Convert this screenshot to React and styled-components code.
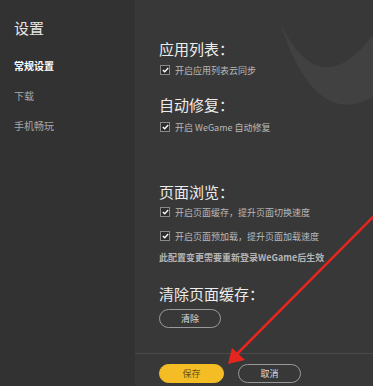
import React from 'react';
import styled, { createGlobalStyle } from 'styled-components';

const GlobalStyle = createGlobalStyle`
  html, body { margin: 0; padding: 0; background: #383838; }
  body { font-family: "Noto Sans CJK SC", "Noto Sans", sans-serif; }
`;

const Window = styled.div`
  display: flex;
  width: 373px;
  height: 386px;
  overflow: hidden;
  position: relative;
`;

const Sidebar = styled.nav`
  width: 135px;
  flex-shrink: 0;
  background: #323232;
  padding: 17px 0 0 14px;
  box-sizing: border-box;
  display: flex;
  flex-direction: column;
`;

const SideTitle = styled.div`
  font-size: 15px;
  line-height: 22px;
  color: #e6e6e6;
  margin-bottom: 20px;
`;

const SideItem = styled.div`
  font-size: 10px;
  line-height: 14px;
  height: 14px;
  margin-bottom: 16px;
  color: ${({ active }) => (active ? '#ffffff' : '#a8a8a8')};
  font-weight: ${({ active }) => (active ? 700 : 400)};
`;

const Main = styled.main`
  flex: 1;
  display: flex;
  flex-direction: column;
  background: #383838;
  position: relative;
`;

const Content = styled.div`
  flex: 1;
  padding: 0 0 0 24px;
  display: flex;
  flex-direction: column;
  position: relative;
  z-index: 1;
`;

const SectionTitle = styled.div`
  font-size: 15px;
  line-height: 20px;
  color: #ececec;
  margin-top: ${({ top }) => top}px;
`;

const Row = styled.label`
  display: flex;
  align-items: center;
  gap: 5px;
  height: 14px;
  margin-top: ${({ top }) => top}px;
  font-size: 9px;
  color: #b9b9b9;
  white-space: nowrap;
`;

const Box = styled.span`
  width: 8px;
  height: 8px;
  margin-left: 1px;
  border: 1px solid #8a8a8a;
  background: #2c2c2c;
  display: flex;
  align-items: center;
  justify-content: center;
`;

const Note = styled.div`
  font-size: 9px;
  line-height: 14px;
  font-weight: 700;
  color: #b5b5b5;
  margin-top: 8px;
  white-space: nowrap;
`;

const PillButton = styled.button`
  width: ${({ w }) => w}px;
  height: 19px;
  margin-top: ${({ top }) => top || 0}px;
  border-radius: 10px;
  border: 1px solid ${({ primary }) => (primary ? '#f4bd26' : '#9a9a9a')};
  background: ${({ primary }) => (primary ? '#f4bd26' : 'transparent')};
  color: ${({ primary }) => (primary ? '#6a5312' : '#dedede')};
  font-family: inherit;
  font-size: 9px;
  padding: 0;
  box-sizing: border-box;
`;

const Footer = styled.div`
  border-top: 1px solid #4a4a4a;
  height: 33px;
  padding: 10px 0 0 24px;
  box-sizing: border-box;
  display: flex;
  gap: 14px;
  position: relative;
  z-index: 1;
`;

const Swoosh = styled.svg`
  position: absolute;
  left: 0;
  top: 0;
  z-index: 0;
`;

const Annotation = styled.svg`
  position: absolute;
  left: 0;
  top: 0;
  z-index: 5;
  pointer-events: none;
`;

function Check() {
  return (
    <Box>
      <svg width="7" height="6" viewBox="0 0 7 6">
        <path d="M0.8 3 L2.7 4.8 L6.2 1" fill="none" stroke="#fff" strokeWidth="1.3" />
      </svg>
    </Box>
  );
}

export default function App() {
  return (
    <>
      <GlobalStyle />
      <Window>
        <Sidebar>
          <SideTitle>设置</SideTitle>
          <SideItem active>常规设置</SideItem>
          <SideItem>下载</SideItem>
          <SideItem>手机畅玩</SideItem>
        </Sidebar>
        <Main>
          <Swoosh width="238" height="140" viewBox="135 0 238 140">
            <path d="M280 23 Q320 105 373 35 L373 97 Q315 130 280 23 Z" fill="#414141" />
          </Swoosh>
          <Content>
            <SectionTitle top={39}>应用列表：</SectionTitle>
            <Row top={4}><Check />开启应用列表云同步</Row>
            <SectionTitle top={18}>自动修复：</SectionTitle>
            <Row top={5}><Check />开启 WeGame 自动修复</Row>
            <SectionTitle top={48}>页面浏览：</SectionTitle>
            <Row top={3}><Check />开启页面缓存，提升页面切换速度</Row>
            <Row top={10}><Check />开启页面预加载，提升页面加载速度</Row>
            <Note>此配置变更需要重新登录WeGame后生效</Note>
            <SectionTitle top={19}>清除页面缓存：</SectionTitle>
            <PillButton w={62} top={5}>清除</PillButton>
          </Content>
          <Footer>
            <PillButton primary w={65}>保存</PillButton>
            <PillButton w={63}>取消</PillButton>
          </Footer>
        </Main>
        <Annotation width="373" height="386" viewBox="0 0 373 386">
          <line x1="374" y1="216" x2="236" y2="355" stroke="#e5261f" strokeWidth="2.5" />
          <polygon points="228,364 232,348 245,360" fill="#e5261f" />
        </Annotation>
      </Window>
    </>
  );
}
